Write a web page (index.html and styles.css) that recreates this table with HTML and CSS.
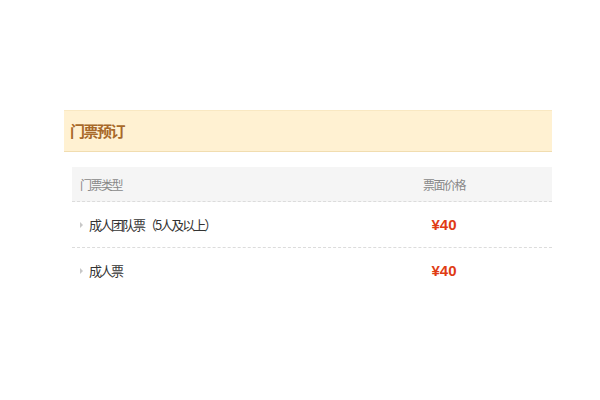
FILE: index.html
```html
<!DOCTYPE html>
<html lang="zh-CN">
<head>
  <meta charset="UTF-8">
  <title>门票预订</title>
  <link rel="stylesheet" href="styles.css">
</head>
<body>
  <div class="booking">
    <!-- 标题栏 -->
    <div class="booking-title">门票预订</div>

    <!-- 票种列表 -->
    <div class="ticket-table">
      <div class="ticket-row ticket-head">
        <div class="col-name">门票类型</div>
        <div class="col-price">票面价格</div>
        <div></div>
      </div>
      <div class="ticket-row">
        <div class="col-name"><span class="arrow"></span>成人团队票（5人及以上）</div>
        <div class="col-price price">¥40</div>
        <div></div>
      </div>
      <div class="ticket-row last">
        <div class="col-name"><span class="arrow"></span>成人票</div>
        <div class="col-price price">¥40</div>
        <div></div>
      </div>
    </div>
  </div>
</body>
</html>
```

FILE: styles.css
```css
body {
  margin: 0;
  background: #ffffff;
  font-family: "Noto Sans CJK SC", "Noto Sans", sans-serif;
  color: #333;
}

.booking {
  width: 488px;
  margin: 110px 0 0 64px;
}

/* 标题栏 */
.booking-title {
  height: 40px;
  line-height: 40px;
  padding-left: 6px;
  background: #fff1d2;
  border-top: 1px solid #f9e8c2;
  border-bottom: 1px solid #f1ddb0;
  font-size: 15px;
  letter-spacing: -1.5px;
  font-weight: bold;
  color: #a8692a;
}

/* 票种表格 */
.ticket-table {
  margin: 15px 0 0 8px;
}

.ticket-row {
  display: grid;
  grid-template-columns: 1fr 112px 52px;
  align-items: center;
  height: 45px;
  border-bottom: 1px dashed #dcdcdc;
  font-size: 13px;
  letter-spacing: -2px;
}

.ticket-row.last {
  border-bottom: none;
}

.ticket-head {
  height: 34px;
  background: #f5f5f5;
  font-size: 12px;
  letter-spacing: -1.5px;
  color: #888;
}

.col-name {
  padding-left: 8px;
  display: flex;
  align-items: center;
}

.col-price {
  text-align: center;
}

.arrow {
  width: 0;
  height: 0;
  border-top: 3px solid transparent;
  border-bottom: 3px solid transparent;
  border-left: 3px solid #c8c8c8;
  margin-right: 6px;
}

.price {
  font-family: "Liberation Sans", Arial, sans-serif;
  font-weight: bold;
  font-size: 15px;
  letter-spacing: 0;
  color: #e03c14;
}
```
